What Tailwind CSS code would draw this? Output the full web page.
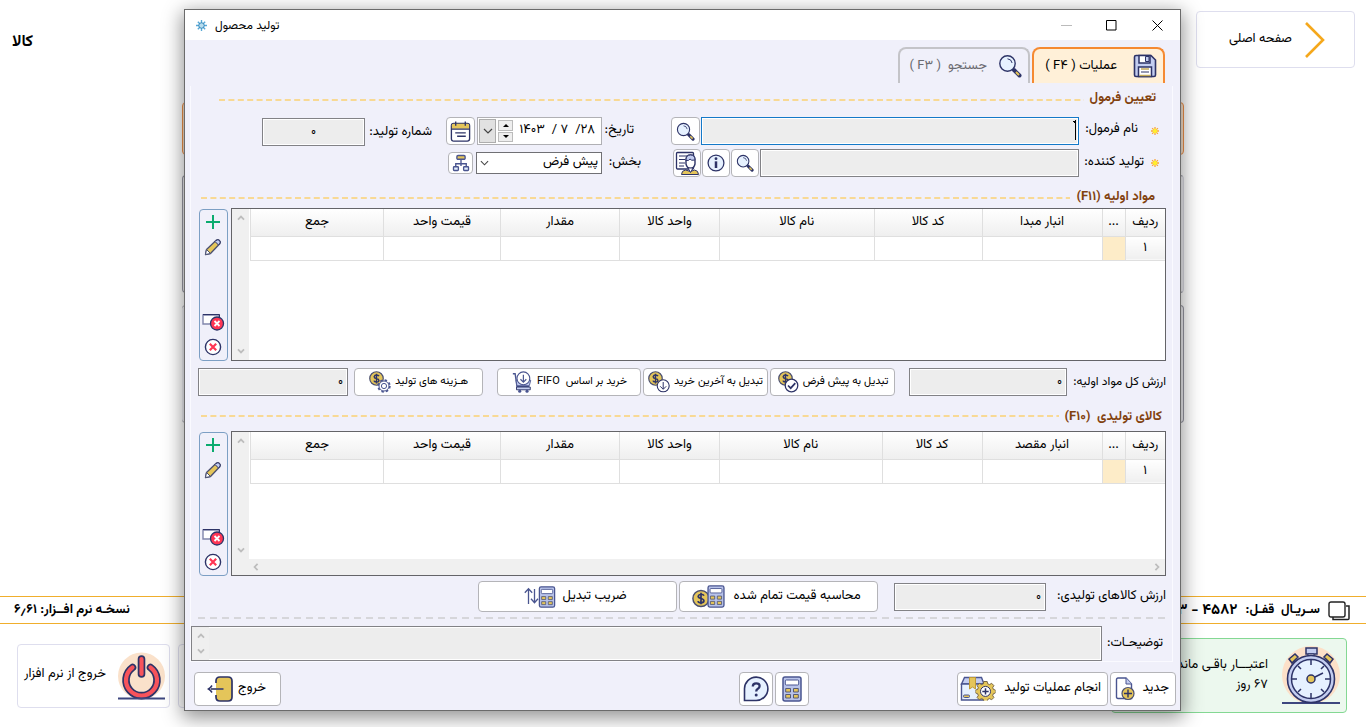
<!DOCTYPE html>
<html lang="fa" dir="rtl">
<head>
<meta charset="utf-8">
<title>تولید محصول</title>
<script src="https://cdn.jsdelivr.net/npm/@tailwindcss/browser@4"></script>
</head>
<body class="relative flex min-h-screen flex-col overflow-hidden bg-white text-xs text-black font-['Vazirmatn','Roboto','Noto_Sans_Arabic','DejaVu_Sans',sans-serif]">

<svg class="hidden" aria-hidden="true">
  <defs>
    <symbol id="search" viewBox="0 0 24 24"><path d="M16 16l5.500 5.500" stroke="#2d3367" stroke-width="4" stroke-linecap="round"/><path d="M18 18l3 3" stroke="#e4c55a" stroke-width="2"/><circle cx="9.500" cy="9.500" r="7.700" fill="#e6f1ff" stroke="#2d3367" stroke-width="1.400"/><path d="M9.500 4.800q4 .3 4.600 4.200" fill="none" stroke="#2d3367"/></symbol>
    <symbol id="save" viewBox="0 0 24 24"><path d="M3 1.500h15l4.500 4.500v15q0 1.500-1.500 1.500H3q-1.500 0-1.500-1.500V3q0-1.500 1.500-1.500z" fill="#c3cdf0" stroke="#2d3367" stroke-width="1.600"/><path d="M6 1.500h11v7.500H6zM5.500 13h13v9.500h-13z" fill="#fff" stroke="#2d3367" stroke-width="1.500"/><path d="M12.500 2.500h3.500v5h-3.500z" fill="#c3cdf0" stroke="#2d3367"/><path d="M8 15h8M6.500 21.500h11" stroke="#c5ab5a" stroke-width="1.500"/><path d="M8 18h8" stroke="#2d3367"/></symbol>
    <symbol id="cal" viewBox="0 0 24 24"><rect x="2.500" y="3.500" width="19" height="18.500" rx="2.500" fill="#fff" stroke="#2d3367" stroke-width="1.400"/><path d="M3 9V5.500Q3 4 5 4h14q2 0 2 1.500V9z" fill="#e4c55a"/><path d="M2.500 9.500h19M6.500 13.500h11M8.500 17h9M7 1.500v4.500M17 1.500v4.500" stroke="#2d3367" stroke-width="1.400"/></symbol>
    <symbol id="tree" viewBox="0 0 24 24"><g fill="none" stroke="#4a5590" stroke-width="1.800"><path d="M12 7v9M5 17v-4h14v4"/><rect x="6.500" y="2" width="11" height="5" rx="1.500" fill="#e4c55a"/><rect x="2" y="17" width="6.500" height="5" rx="1" fill="#e6f1ff"/><rect x="15.500" y="17" width="6.500" height="5" rx="1" fill="#e6f1ff"/></g></symbol>
    <symbol id="info" viewBox="0 0 24 24"><circle cx="12" cy="12" r="9.500" fill="#e6f1ff" stroke="#2d3367" stroke-width="1.500"/><path d="M12 10v8" stroke="#2d3367" stroke-width="3"/><circle cx="12" cy="6.800" r="1.700" fill="#2d3367"/></symbol>
    <symbol id="person" viewBox="0 0 24 24"><rect x="1.500" y="1.500" width="17" height="16.500" rx="1" fill="#fff" stroke="#2d3367" stroke-width="1.300"/><path d="M4 5h8M4 8.500h6M4 12h6M4 15h5" stroke="#2d3367" stroke-width="1.200"/><path d="M6.500 23.500q0-4 4-4.500l5 1.500 4-1.500q4 .5 4 4.500z" fill="#e4c55a" stroke="#2d3367"/><path d="M11 9q0-5 4.500-5T20 9v4q-1 4.500-4.500 4.500T11 13z" fill="#fff" stroke="#2d3367" stroke-width="1.400"/><path d="M11 9q0-5 4.500-5T20 9q-4 1-5-1-1 2-4 1.500z" fill="#c3cdf0" stroke="#2d3367"/><path d="M13 17l2.500 4.500L18 17z" fill="#fff" stroke="#2d3367"/></symbol>
    <symbol id="plus" viewBox="0 0 16 16"><path d="M8 1v14M1 8h14" stroke="#0bab6f" stroke-width="2"/></symbol>
    <symbol id="pencil" viewBox="0 0 18 18"><path d="M1.500 16.500l1-5L12.500 2q1.500-1 3 .5t.5 3L6.500 15.500z" fill="#e4c55a" stroke="#4a4f70" stroke-width="1.300" stroke-linejoin="round"/><path d="M12 2.500q2-1.500 3.500 0t0 3.500l-1 1-3.500-3.500z" fill="#c3cdf0" stroke="#2d3367"/><path d="M2.500 11.500l4 4-5 1z" fill="#fff" stroke="#4a4f70"/></symbol>
    <symbol id="rowdel" viewBox="0 0 24 18"><path d="M2 2h16v9H2z" fill="#fff" stroke="#8085ac" stroke-width="1.400"/><path d="M2 1.500h16.500v3" fill="none" stroke="#2d3367"/><circle cx="16" cy="10.500" r="6.500" fill="#ff3654" stroke="#2d3367" stroke-width="1.300"/><path d="M13.500 8l5 5m0-5l-5 5" stroke="#fff" stroke-width="1.800"/></symbol>
    <symbol id="xcirc" viewBox="0 0 18 18"><circle cx="9" cy="9" r="7.600" fill="#fff" stroke="#2d3367" stroke-width="1.400"/><path d="M5.800 5.800l6.400 6.400m0-6.400l-6.400 6.400" stroke="#ff3654" stroke-width="2.200"/></symbol>
    <symbol id="coin" viewBox="0 0 16 16"><circle cx="8" cy="8" r="7.200" fill="#e4c55a" stroke="#4a4f70" stroke-width="1.300"/><path d="M10.700 5.500Q10 4.200 8 4.200T5.500 6Q5.500 7.500 8 8t2.600 2.100Q10.500 11.800 8 11.800T5.300 10.300M8 2.800v10.400" fill="none" stroke="#2d3367" stroke-width="1.500"/></symbol>
    <symbol id="coincheck" viewBox="0 0 22 22"><use href="#coin" x="1" y="0" width="15" height="15"/><circle cx="14.500" cy="14.500" r="6.300" fill="#fff" stroke="#2d3367" stroke-width="1.300"/><path d="M11 14.500l2.700 2.700 4.600-5" fill="none" stroke="#2d3367" stroke-width="1.700"/></symbol>
    <symbol id="coindown" viewBox="0 0 22 22"><use href="#coin" x="0" y="0" width="15" height="15"/><circle cx="15.200" cy="14.800" r="6" fill="#fff" stroke="#2d3367" stroke-width="1.100"/><path d="M15.200 11v7m-3-2.700l3 3 3-3" fill="none" stroke="#2d3367"/></symbol>
    <symbol id="coingear" viewBox="0 0 22 22"><use href="#coin" x="0" y="0" width="15" height="15"/><circle cx="15" cy="15" r="5.800" fill="none" stroke="#4a5590" stroke-width="1.800" stroke-dasharray="2.400 2.150"/><circle cx="15" cy="15" r="5" fill="#fff" stroke="#4a5590"/><circle cx="15" cy="15" r="2.600" fill="#fff" stroke="#4a5590"/></symbol>
    <symbol id="cart" viewBox="0 0 22 24"><path d="M1 3h2.500l2 14H19" fill="none" stroke="#4a5590" stroke-width="1.500"/><path d="M4.500 10h16L19 16H5.500z" fill="#c3cdf0" stroke="#4a5590"/><circle cx="12.500" cy="8" r="7" fill="#fff" stroke="#4a5590" stroke-width="1.200"/><path d="M12.500 4v8m-3.200-3l3.200 3.200L15.700 9" fill="none" stroke="#4a5590" stroke-width="1.300"/><path d="M5 17.500h15v3H5z" fill="#c3cdf0" stroke="#2d3367"/><circle cx="8.500" cy="22" r="1.700" fill="#4a5590"/><circle cx="16.500" cy="22" r="1.700" fill="#4a5590"/></symbol>
    <symbol id="calc" viewBox="0 0 20 26"><rect x="1" y="1" width="18" height="24" rx="2" fill="#b8c3ea" stroke="#4a5590" stroke-width="1.500"/><rect x="3.300" y="4" width="13.400" height="5" rx="1" fill="#fff" stroke="#4a5590"/><g fill="#e4c55a" stroke="#4a4f70" stroke-width=".9"><path d="M3.700 12.500h4.800v3.500H3.700zM11.500 12.500h4.800v3.500h-4.800zM3.700 18.500h4.800V22H3.700zM11.500 18.500h4.800V22h-4.800z"/></g></symbol>
    <symbol id="coincalc" viewBox="0 0 33 24"><use href="#coin" x="0" y="4" width="18" height="19"/><use href="#calc" x="15" y="0" width="18" height="23"/></symbol>
    <symbol id="swapcalc" viewBox="0 0 32 22"><path d="M4.500 18V3M.8 6.800l3.700-4 3.700 4M10.500 3v13.500M7 12.800l3.500 4 3.500-4" fill="none" stroke="#4a5590" stroke-width="1.300"/><use href="#calc" x="14" y="0" width="18" height="22"/></symbol>
    <symbol id="help" viewBox="0 0 26 26"><path d="M1.500 24.500V13A11.700 11.700 0 1 1 13 24.500z" fill="#e6f1ff" stroke="#2d3367" stroke-width="1.600"/><path d="M9.800 10.500q0-3.200 3.400-3.200t3.400 2.800q0 1.700-1.700 2.600T13.200 15.500" fill="none" stroke="#2d3367" stroke-width="2.300"/><circle cx="13.200" cy="19" r="1.500" fill="#2d3367"/></symbol>
    <symbol id="newdoc" viewBox="0 0 20 24"><path d="M1.500 2.500q0-1.500 1.500-1.500h8l5.500 6v14.500H3q-1.500 0-1.500-1.500z" fill="#fff" stroke="#4a5590" stroke-width="1.400"/><path d="M11 1v6h5.500" fill="#c3cdf0" stroke="#4a5590"/><circle cx="13" cy="16.500" r="6" fill="#e4c55a" stroke="#4a4f70" stroke-width="1.200"/><path d="M13 12.500v8m-4-4h8" stroke="#2d3367" stroke-width="1.400"/></symbol>
    <symbol id="gear" viewBox="0 0 20 20"><path d="M8.300 1h3.400l.5 2.300 1.900.8 2-1.300 2.300 2.300-1.200 2 .8 1.900 2 .5v3l-2 .6-.8 1.900 1.200 2-2.300 2.300-2-1.200-1.900.8-.5 2.100H8.300l-.5-2.100-1.900-.8-2 1.200L1.600 17l1.200-2-.8-1.900L0 12.500v-3L2 9l.8-1.900-1.200-2 2.300-2.300 2 1.300 1.900-.8z" fill="#e4c55a" stroke="#6b5a3c" stroke-width=".9"/><circle cx="10" cy="10.900" r="5" fill="#fff" stroke="#2d3367"/><path d="M10 7.700v6.400M6.800 10.900h6.400" stroke="#2d3367" stroke-width="1.500"/></symbol>
    <symbol id="box" viewBox="0 0 36 26"><path d="M4.500 1.500h17L24 8H1.500z" fill="#c3cdf0" stroke="#4a5590" stroke-width="1.400"/><path d="M1.500 8h22v16h-22z" fill="#e6f1ff" stroke="#4a5590" stroke-width="1.400"/><path d="M9.500 1.500h6V13l-3-2-3 2z" fill="#e4c55a" stroke="#c09a35"/><rect x="3.500" y="19" width="6" height="2.500" rx="1" fill="#e4c55a" stroke="#4a5590"/><use href="#gear" x="15.500" y="4.500" width="20" height="20"/></symbol>
    <symbol id="exit" viewBox="0 0 26 26"><path d="M9 7V5q0-4 4-4h8q4 0 4 4v16q0 4-4 4h-8q-4 0-4-4v-2" fill="#e4c55a" stroke="#2d3367" stroke-width="1.700"/><path d="M16.500 13H4" stroke="#4a4f70" stroke-width="1.800"/><path d="M5 9.500Q3.500 12 1.500 13q2 1 3.500 3.500" fill="none" stroke="#2d3367" stroke-width="1.500"/></symbol>
    <symbol id="chev" viewBox="0 0 10 6"><path d="M1 1l4 4 4-4" fill="none" stroke="currentColor" stroke-width="1.200"/></symbol>
    <symbol id="chevb" viewBox="0 0 10 6"><path d="M1.200 1L5 4.800 8.800 1" fill="none" stroke="currentColor" stroke-width="2.200"/></symbol>
    <symbol id="star" viewBox="0 0 10 10"><path d="M5 1v8M1 5h8M2.100 2.100l5.800 5.800m0-5.800L2.100 7.900" stroke="#f9a63a" stroke-width="1.300"/><circle cx="5" cy="5" r="2.200" fill="#ffee2e"/></symbol>
  </defs>
</svg>

<!-- Main page behind the dialog -->
<header class="flex items-start justify-between pt-[11px] pr-[11px] pl-3">
  <a href="#" class="flex h-[57px] w-[159px] items-center gap-3 rounded border border-[#dedeee] pr-7 text-[13px]">
    <svg class="h-[38px] w-[22px]" viewBox="0 0 22 38"><path d="M2 2l17 17L2 36" fill="none" stroke="#f5a81c" stroke-width="2.600"/></svg>
    صفحه اصلی
  </a>
  <h1 class="pt-[22px] text-base leading-5 font-bold">کالا</h1>
</header>
<main class="mr-[182px] ml-[182px] flex grow flex-col pt-[34px]">
  <div class="h-[53px] rounded border border-[#f0924a] bg-[#fce4cd]"></div>
  <div class="mt-5 h-[118px] rounded border border-r-[#dcdce4] border-[#9a9aa6] bg-[#f0f0f4]"></div>
  <div class="mt-3 h-[118px] rounded border border-l-0 border-[#9a9aa6] bg-[#f0f0f4]"></div>
</main>
<div class="flex h-7 items-center justify-between border-y border-[#f0ae2c] pt-[2px] pr-4 pl-[14px] text-[13px] font-bold">
  <div class="flex items-center gap-2">
    <svg class="h-5 w-[22px]" viewBox="0 0 22 20"><path d="M5 16v2.500h15q1 0 1-1V5h-3" fill="none" stroke="#222" stroke-width="1.500"/><rect x="1" y="1" width="16" height="15" rx="2" fill="#fff" stroke="#222" stroke-width="1.400"/></svg>
    <span>سـریـال &nbsp;قفـل:</span><span class="text-[15px]">۴۵۸۲ - ۳</span>
  </div>
  <p>نسخـه نرم افــزار: ۶٫۶۱</p>
</div>
<footer class="flex h-[103px] items-start justify-between pt-[14px] pr-[19px] pl-[17px] text-[13px]">
  <section class="flex h-[75px] w-[236px] items-center gap-[14px] rounded border border-[#84d893] bg-[#ecf8ee] pr-[6px]">
    <svg class="h-[59px] w-[58px] shrink-0" viewBox="0 0 58 59"><circle cx="29" cy="29" r="29" fill="#fce0c8"/><path d="M0 57h58" stroke="#3d477f" stroke-width="2"/><rect x="24" y="2" width="11" height="6" fill="#c3cdf0" stroke="#2d3367" stroke-width="1.500"/><path d="M26 8h6v5h-6z" fill="#fff" stroke="#2d3367"/><path d="M7 13l6-5 3 3-6 6zM51 13l-6-5-3 3 6 6z" fill="#e4c55a" stroke="#2d3367" stroke-width="1.500"/><circle cx="29" cy="33" r="23.500" fill="#c3cdf0" stroke="#2d3367" stroke-width="1.600"/><circle cx="29" cy="33" r="19.500" fill="#e6f1ff" stroke="#2d3367" stroke-width="1.500"/><path d="M29 14v5M29 47v5M10 33h5M43 33h5M16 20l3 3M42 20l-3 3M16 46l3-3M42 46l-3-3M29 33l12-6" stroke="#2d3367" stroke-width="1.500"/><circle cx="29" cy="33" r="4" fill="#e4c55a" stroke="#2d3367" stroke-width="1.500"/></svg>
    <p class="pb-[2px] leading-5 whitespace-nowrap">اعتبـــار باقـی مانده<br>۶۷ روز</p>
  </section>
  <div class="flex gap-2 pt-[6px]">
    <div class="h-16 w-10 rounded border border-[#dedeee]"></div>
    <button class="flex h-16 w-[153px] items-center justify-between rounded border border-[#dedeee] pr-1 pl-[6px]">
      <svg class="h-[48px] w-[47px]" viewBox="0 0 47 48"><circle cx="23.500" cy="24" r="23.500" fill="#fae1ca"/><path d="M14.500 15.500a15.500 15.500 0 1 0 18 0" fill="none" stroke="#2d3367" stroke-width="7.600" stroke-linecap="round"/><path d="M14.500 15.500a15.500 15.500 0 1 0 18 0" fill="none" stroke="#f7535b" stroke-width="4.200" stroke-linecap="round"/><path d="M23.500 7v15" stroke="#2d3367" stroke-width="7.600" stroke-linecap="round"/><path d="M23.500 7v15" stroke="#f7535b" stroke-width="4.200" stroke-linecap="round"/><path d="M0 46.500h47" stroke="#3d477f" stroke-width="2"/></svg>
      <span class="pb-[2px]">خروج از نرم افزار</span>
    </button>
  </div>
</footer>

<!-- Dialog window -->
<div role="dialog" aria-labelledby="title" class="absolute top-[9px] right-[185px] left-[184px] flex flex-col border border-[#6b6b6b] bg-[#f0f0fa] shadow-[0_5px_18px_2px_rgba(0,0,0,0.42)]">
  <div dir="ltr" class="flex h-[30px] items-center bg-white pl-[11px]">
    <svg class="size-[11px]" viewBox="0 0 12 12"><path d="M6 0v12M0 6h12M2 2l8 8m0-8l-8 8" stroke="#57a8d6" stroke-width="1.500"/><circle cx="6" cy="6" r="3" fill="#b8ddee" stroke="#2b82b8"/></svg>
    <h2 id="title" dir="rtl" class="ml-2 pt-[2px] text-xs">تولید محصول</h2>
    <button aria-label="کوچک کردن" class="ml-auto flex h-[30px] w-[46px] items-center justify-center"><svg class="size-[11px]" viewBox="0 0 11 11"><path d="M0 5.500h11" stroke="#bbb"/></svg></button>
    <button aria-label="بزرگ کردن" class="flex h-[30px] w-[45px] items-center justify-center"><svg class="size-[11px]" viewBox="0 0 11 11"><path d="M.5.500h9.500v9.500H.5z" fill="none" stroke="#000"/></svg></button>
    <button aria-label="بستن" class="flex h-[30px] w-[46px] items-center justify-center"><svg class="size-[11px]" viewBox="0 0 11 11"><path d="M.5.500l10 10m0-10l-10 10" stroke="#000"/></svg></button>
  </div>

  <div role="tablist" class="flex gap-[2px] pt-[7px] pr-[15px] text-[13px]">
    <button role="tab" aria-selected="true" class="flex h-9 w-[133px] items-center gap-4 rounded-t-lg border-2 border-b-0 border-[#f58a32] bg-[#fff0d8] pr-[6px]"><svg class="size-6"><use href="#save"/></svg><span class="pt-[2px]">عملیات ( F۴ )</span></button>
    <button role="tab" class="flex h-9 w-[132px] items-center gap-[11px] rounded-t-lg border-2 border-b-0 border-[#c4c4c8] pr-[6px] text-[#6a6a70]"><svg class="size-6"><use href="#search"/></svg><span class="pt-[2px]">جستجو &nbsp;( F۳ )</span></button>
  </div>

  <div class="mt-[3px] mr-[7px] ml-[5px] flex flex-col border-x border-b border-[#fafaff]">
    <div class="flex h-6 items-center gap-[6px] pt-[2px] pr-4 pl-7"><h3 class="text-[13px] font-bold text-[#82420f]">تعیین فرمول</h3><svg class="mt-[2px] h-[2px] flex-1"><path d="M0 1h2000" stroke="#f8d994" stroke-width="2" stroke-dasharray="6 3.400"/></svg></div>

    <div class="mt-[7px] flex pr-3">
      <div class="flex flex-1 flex-col gap-1">
        <div class="flex h-7 items-center">
          <svg class="size-[10px] shrink-0"><use href="#star"/></svg>
          <label for="formula" class="w-[71px] pr-3 pb-[2px] text-[13px] whitespace-nowrap">نام فرمول:</label>
          <div class="relative h-7 min-w-0 flex-1">
            <input id="formula" class="h-full w-full border border-[#1479c8] bg-[#ededed] px-1 ring-1 ring-white ring-inset outline-none">
            <svg class="pointer-events-none absolute top-[3px] right-[3px] h-5 w-[3px]" viewBox="0 0 3 20"><path d="M2.500 0v20M0 1.500h2.500M1 2.500h1.500" stroke="#000"/></svg>
          </div>
          <button aria-label="جستجوی فرمول" class="mr-px flex h-7 w-[29px] items-center justify-center rounded border border-[#b4b4b8] bg-white"><svg class="size-[19px]"><use href="#search"/></svg></button>
        </div>
        <div class="flex h-7 items-center">
          <svg class="size-[10px] shrink-0"><use href="#star"/></svg>
          <label for="producer" class="w-[71px] pr-[6px] text-[13px] whitespace-nowrap">تولید کننده:</label>
          <input id="producer" class="h-7 min-w-0 flex-1 border border-[#828286] bg-[#ededed] px-1 ring-1 ring-white ring-inset">
          <div class="mr-px ml-[2px] flex gap-px">
            <button aria-label="جستجو" class="flex size-7 items-center justify-center rounded border border-[#b4b4b8] bg-white"><svg class="size-[18px]"><use href="#search"/></svg></button>
            <button aria-label="اطلاعات" class="flex size-7 items-center justify-center rounded border border-[#b4b4b8] bg-white"><svg class="size-5"><use href="#info"/></svg></button>
            <button aria-label="شخص" class="flex size-7 items-center justify-center rounded border border-[#b4b4b8] bg-white"><svg class="size-6"><use href="#person"/></svg></button>
          </div>
        </div>
      </div>
      <div class="mr-[30px] flex w-[195px] flex-col gap-1">
        <div class="flex h-7 items-center">
          <label for="date" class="w-[39px] pr-[7px] text-[13px] whitespace-nowrap">تاریخ:</label>
          <div class="flex h-7 w-[125px] items-center border border-[#b0b0b4] bg-white pl-px">
            <input id="date" dir="ltr" value="۱۴۰۳ &nbsp;/ ۷ &nbsp;/۲۸" class="min-w-0 flex-1 pr-[6px] text-right text-[13px] outline-none">
            <div class="ml-[2px] flex h-[22px] w-[15px] flex-col gap-px">
              <button aria-label="افزایش" class="flex flex-1 items-center justify-center border border-[#bbb] bg-[#eee]"><svg class="h-[3px] w-[6px]" viewBox="0 0 6 3"><path d="M0 3l3-3 3 3z"/></svg></button>
              <button aria-label="کاهش" class="flex flex-1 items-center justify-center border border-[#bbb] bg-[#eee]"><svg class="h-[3px] w-[6px]" viewBox="0 0 6 3"><path d="M0 0l3 3 3-3z"/></svg></button>
            </div>
            <button aria-label="باز کردن تقویم" class="flex h-6 w-[17px] items-center justify-center border border-[#adadad] bg-[#e1e1e1]"><svg class="h-[6px] w-[10px] text-[#444]"><use href="#chev"/></svg></button>
          </div>
          <button aria-label="تقویم" class="mr-[2px] flex h-7 w-[29px] items-center justify-center rounded border border-[#b4b4b8] bg-white"><svg class="size-[23px]"><use href="#cal"/></svg></button>
        </div>
        <div class="flex h-7 items-center">
          <label for="section" class="w-[39px] text-[13px] whitespace-nowrap">بخش:</label>
          <div class="relative h-[22px] w-[126px]">
            <select id="section" class="h-full w-full appearance-none border border-[#707074] bg-white pr-[3px] text-[13px]"><option>پیش فرض</option></select>
            <svg class="pointer-events-none absolute top-2 left-1 h-[6px] w-[9px] text-[#444]"><use href="#chev"/></svg>
          </div>
          <button aria-label="ساختار بخش" class="mr-[3px] flex h-[22px] w-[25px] items-center justify-center rounded border border-[#b4b4b8] bg-white"><svg class="size-[18px]"><use href="#tree"/></svg></button>
        </div>
      </div>
      <div class="ml-[71px] flex h-[30px] items-center pr-[14px]">
        <label for="num" class="w-[67px] pt-[2px] text-[13px] whitespace-nowrap">شماره تولید:</label>
        <input id="num" value="۰" class="h-7 w-[103px] border border-[#828286] bg-[#ededed] text-center ring-1 ring-white ring-inset">
      </div>
    </div>

    <div class="mt-[9px] flex h-[22px] items-center gap-[6px] pt-[2px] pr-[17px] pl-[10px]"><h3 class="text-[13px] font-bold text-[#82420f]">مواد اولیه (F۱۱)</h3><svg class="h-[2px] flex-1"><path d="M0 1h2000" stroke="#f8d994" stroke-width="2" stroke-dasharray="6 3.400"/></svg></div>

    <div class="flex h-[153px] gap-[3px] pr-[6px] pl-2">
      <div class="flex min-w-0 flex-1 border border-[#646468] bg-white">
        <div class="min-w-0 flex-1 pl-px">
          <table class="w-full table-fixed border-collapse text-[13px]">
            <thead><tr class="h-[27px] bg-linear-to-b from-white to-[#efefef]">
              <th class="w-10 border-b border-l border-[#dfdfdf] font-normal">ردیف</th><th class="w-[23px] border-b border-l border-[#dfdfdf] font-normal">...</th><th class="w-[120px] border-b border-l border-[#dfdfdf] font-normal">انبار مبدا</th><th class="w-[108px] border-b border-l border-[#dfdfdf] font-normal">کد کالا</th><th class="border-b border-l border-[#dfdfdf] font-normal">نام کالا</th><th class="w-[100px] border-b border-l border-[#dfdfdf] font-normal">واحد کالا</th><th class="w-[119px] border-b border-l border-[#dfdfdf] font-normal">مقدار</th><th class="w-[117px] border-b border-l border-[#dfdfdf] font-normal">قیمت واحد</th><th class="w-[133px] border-b border-l border-[#dfdfdf] font-normal">جمع</th>
            </tr></thead>
            <tbody><tr class="h-6">
              <td class="border-b border-l border-[#dfdfdf] bg-linear-to-b from-white to-[#efefef] pt-[2px] text-center">۱</td><td class="border-b border-l border-[#dfdfdf] bg-[#fdecc8]"></td><td class="border-b border-l border-[#dfdfdf]"></td><td class="border-b border-l border-[#dfdfdf]"></td><td class="border-b border-l border-[#dfdfdf]"></td><td class="border-b border-l border-[#dfdfdf]"></td><td class="border-b border-l border-[#dfdfdf]"></td><td class="border-b border-l border-[#dfdfdf]"></td><td class="border-b border-l border-[#dfdfdf]"></td>
            </tr></tbody>
          </table>
        </div>
        <div class="flex w-[17px] flex-col items-center justify-between bg-[#f0f0f0] py-[6px] text-[#bdbdbd]"><svg class="h-[6px] w-2 rotate-180"><use href="#chevb"/></svg><svg class="h-[6px] w-2"><use href="#chevb"/></svg></div>
      </div>
      <div class="mt-px flex w-[29px] flex-col items-center rounded border border-[#7c9fc4] pt-1 pr-[2px] pb-1">
        <button aria-label="افزودن"><svg class="size-4"><use href="#plus"/></svg></button>
        <button aria-label="ویرایش" class="mt-2"><svg class="size-[18px]"><use href="#pencil"/></svg></button>
        <button aria-label="حذف سطر" class="mt-auto"><svg class="h-[18px] w-6"><use href="#rowdel"/></svg></button>
        <button aria-label="حذف همه" class="mt-[7px]"><svg class="size-[18px]"><use href="#xcirc"/></svg></button>
      </div>
    </div>

    <div class="mt-[7px] flex h-7 items-center pr-[6px] pl-[7px]">
      <label for="rawsum" class="w-[99px] text-xs whitespace-nowrap">ارزش کل مواد اولیه:</label>
      <input id="rawsum" value="۰" class="h-7 w-[158px] border border-[#828286] bg-[#ededed] px-1 ring-1 ring-white ring-inset">
      <button class="mr-[14px] flex h-7 w-[125px] items-center justify-center gap-1 rounded border border-[#b4b4b8] bg-white text-[11px] whitespace-nowrap">تبدیل به پیش فرض<svg class="size-[22px] shrink-0"><use href="#coincheck"/></svg></button>
      <button class="mr-[2px] flex h-7 w-[125px] items-center justify-center gap-1 rounded border border-[#b4b4b8] bg-white text-[11px] whitespace-nowrap">تبدیل به آخرین خرید<svg class="size-[22px] shrink-0"><use href="#coindown"/></svg></button>
      <button class="mr-[2px] flex h-7 w-36 items-center justify-center gap-1 rounded border border-[#b4b4b8] bg-white text-[11px] whitespace-nowrap">خرید بر اساس&nbsp; FIFO<svg class="size-[22px] shrink-0"><use href="#cart"/></svg></button>
      <button class="mr-[14px] flex h-7 w-[129px] items-center justify-center gap-1 rounded border border-[#b4b4b8] bg-white text-[11px] whitespace-nowrap">هـزینه های تولید<svg class="size-[22px] shrink-0"><use href="#coingear"/></svg></button>
      <input aria-label="جمع هزینه های تولید" value="۰" class="mr-[6px] h-7 min-w-0 flex-1 border border-[#828286] bg-[#ededed] px-1 ring-1 ring-white ring-inset">
    </div>

    <div class="mt-[9px] flex h-[26px] items-center gap-[6px] pr-[10px] pl-[10px]"><h3 class="text-[13px] font-bold text-[#82420f]">کالای تولیدی &nbsp;(F۱۰)</h3><svg class="mb-1 h-[2px] flex-1"><path d="M0 1h2000" stroke="#f8d994" stroke-width="2" stroke-dasharray="6 3.400"/></svg></div>

    <div class="flex h-[145px] gap-[3px] pr-[6px] pl-2">
      <div class="flex min-w-0 flex-1 flex-col border border-[#646468] bg-white">
        <div class="flex flex-1">
          <div class="min-w-0 flex-1 pl-px">
            <table class="w-full table-fixed border-collapse text-[13px]">
              <thead><tr class="h-[27px] bg-linear-to-b from-white to-[#efefef]">
                <th class="w-10 border-b border-l border-[#dfdfdf] font-normal">ردیف</th><th class="w-[23px] border-b border-l border-[#dfdfdf] font-normal">...</th><th class="w-[120px] border-b border-l border-[#dfdfdf] font-normal">انبار مقصد</th><th class="w-[100px] border-b border-l border-[#dfdfdf] font-normal">کد کالا</th><th class="border-b border-l border-[#dfdfdf] font-normal">نام کالا</th><th class="w-[100px] border-b border-l border-[#dfdfdf] font-normal">واحد کالا</th><th class="w-[119px] border-b border-l border-[#dfdfdf] font-normal">مقدار</th><th class="w-[117px] border-b border-l border-[#dfdfdf] font-normal">قیمت واحد</th><th class="w-[133px] border-b border-l border-[#dfdfdf] font-normal">جمع</th>
              </tr></thead>
              <tbody><tr class="h-6">
                <td class="border-b border-l border-[#dfdfdf] bg-linear-to-b from-white to-[#efefef] pt-[2px] text-center">۱</td><td class="border-b border-l border-[#dfdfdf] bg-[#fdecc8]"></td><td class="border-b border-l border-[#dfdfdf]"></td><td class="border-b border-l border-[#dfdfdf]"></td><td class="border-b border-l border-[#dfdfdf]"></td><td class="border-b border-l border-[#dfdfdf]"></td><td class="border-b border-l border-[#dfdfdf]"></td><td class="border-b border-l border-[#dfdfdf]"></td><td class="border-b border-l border-[#dfdfdf]"></td>
              </tr></tbody>
            </table>
          </div>
          <div class="flex w-[17px] flex-col items-center justify-between bg-[#f0f0f0] py-[6px] text-[#bdbdbd]"><svg class="h-[6px] w-2 rotate-180"><use href="#chevb"/></svg><svg class="h-[6px] w-2"><use href="#chevb"/></svg></div>
        </div>
        <div class="flex h-4 items-center justify-between bg-[#f0f0f0] pr-1 pl-5 text-[#bdbdbd]"><svg class="h-[6px] w-2 -rotate-90"><use href="#chevb"/></svg><svg class="h-[6px] w-2 rotate-90"><use href="#chevb"/></svg></div>
      </div>
      <div class="mt-px flex w-[29px] flex-col items-center rounded border border-[#7c9fc4] pt-1 pr-[2px] pb-1">
        <button aria-label="افزودن"><svg class="size-4"><use href="#plus"/></svg></button>
        <button aria-label="ویرایش" class="mt-2"><svg class="size-[18px]"><use href="#pencil"/></svg></button>
        <button aria-label="حذف سطر" class="mt-auto"><svg class="h-[18px] w-6"><use href="#rowdel"/></svg></button>
        <button aria-label="حذف همه" class="mt-[7px]"><svg class="size-[18px]"><use href="#xcirc"/></svg></button>
      </div>
    </div>

    <div class="mt-[5px] flex h-[31px] items-center pr-[6px]">
      <label for="prodsum" class="w-[120px] text-[13px] whitespace-nowrap">ارزش کالاهای تولیدی:</label>
      <input id="prodsum" value="۰" class="h-7 w-[152px] border border-[#828286] bg-[#ededed] px-1 ring-1 ring-white ring-inset">
      <button class="mr-4 flex h-[31px] w-[199px] items-center justify-center gap-2 rounded border border-[#b4b4b8] bg-white pr-1 text-[13px]">محاسبه قیمت تمام شده<svg class="h-6 w-[33px]"><use href="#coincalc"/></svg></button>
      <button class="mr-[2px] flex h-[31px] w-[199px] items-center justify-center gap-[6px] rounded border border-[#b4b4b8] bg-white pr-1 text-[13px]">ضریب تبدیل<svg class="h-[22px] w-8"><use href="#swapcalc"/></svg></button>
    </div>
    <svg class="mt-[5px] mr-[7px] ml-[7px] h-[2px]"><path d="M0 1h2000" stroke="#d6d6da" stroke-width="2" stroke-dasharray="7 5"/></svg>
    <div class="mt-[7px] flex h-[35px] items-center pr-[9px]">
      <label for="desc" class="w-[61px] text-[13px] whitespace-nowrap">توضیحـات:</label>
      <div class="flex h-[35px] flex-1 border border-[#828286] bg-[#ededed] ring-1 ring-white ring-inset">
        <textarea id="desc" class="h-full min-w-0 flex-1 resize-none px-1"></textarea>
        <div class="flex w-[17px] flex-col items-center justify-between bg-[#efefef] py-[6px] text-[#bdbdbd]"><svg class="h-[6px] w-2 rotate-180"><use href="#chevb"/></svg><svg class="h-[6px] w-2"><use href="#chevb"/></svg></div>
      </div>
    </div>
  </div>

  <div class="flex h-12 items-start gap-[2px] pt-[10px] pr-1 pl-[9px] text-[13px]">
    <button class="flex h-[34px] w-[66px] items-center justify-between rounded border border-[#b4b4b8] bg-white pr-[6px] pl-1">جدید<svg class="h-6 w-5"><use href="#newdoc"/></svg></button>
    <button class="flex h-[34px] w-[151px] items-center justify-between rounded border border-[#b4b4b8] bg-white pr-[6px] pl-[2px] whitespace-nowrap">انجام عملیات تولید<svg class="h-[26px] w-9 shrink-0"><use href="#box"/></svg></button>
    <button aria-label="ماشین حساب" class="mr-[146px] flex size-[34px] items-center justify-center rounded border border-[#b4b4b8] bg-white"><svg class="h-[26px] w-5"><use href="#calc"/></svg></button>
    <button aria-label="راهنما" class="flex size-[34px] items-center justify-center rounded border border-[#b4b4b8] bg-white"><svg class="size-[26px]"><use href="#help"/></svg></button>
    <button class="mr-auto flex h-[34px] w-[87px] items-center justify-between rounded border border-[#b4b4b8] bg-white pr-[14px] pl-3">خروج<svg class="size-[26px]"><use href="#exit"/></svg></button>
  </div>
</div>
</body>
</html>
